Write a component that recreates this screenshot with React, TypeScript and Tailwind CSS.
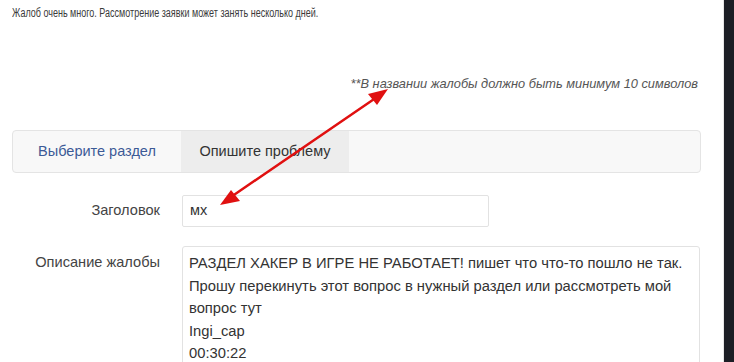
import React from "react";

export default function App() {
  const font = { fontFamily: '"Liberation Sans", Arial, sans-serif' };
  return (
    <div className="relative w-[734px] h-[362px] overflow-hidden bg-white flex" style={font}>
      <div className="w-[724px] h-full bg-white border-r border-[#e6e6e6] pl-3">
        <div className="w-[689px] flex flex-col">
          <div className="pt-[6px] text-[12.5px] leading-[14px] text-[#3a3a3a] whitespace-nowrap origin-left scale-x-[0.72]">
            Жалоб очень много. Рассмотрение заявки может занять несколько дней.
          </div>
          <div className="mt-[56px] text-right pr-[3px] text-[12.8px] leading-[15px] italic text-[#555] whitespace-nowrap">
            **В названии жалобы должно быть минимум 10 символов
          </div>
          <div className="mt-[39px] h-[43px] flex rounded-[4px] border border-[#e4e4e4] bg-[#f8f8f8] overflow-hidden">
            <div className="w-[168px] flex items-center justify-center text-[14.5px] text-[#3c5a96]">
              Выберите раздел
            </div>
            <div className="w-[168px] flex items-center justify-center bg-[#ededed] text-[14.5px] text-[#333]">
              Опишите проблему
            </div>
          </div>
          <div className="mt-[22px] flex items-center">
            <div className="w-[170px] pr-[22px] text-right text-[14.6px] text-[#444]">Заголовок</div>
            <div className="w-[307px] h-[32px] border border-[#e2e2e2] rounded-[2px] px-[7px] flex items-center text-[14.5px] text-[#333]">
              мх
            </div>
          </div>
          <div className="mt-[19px] flex items-start">
            <div className="w-[170px] pr-[22px] pt-[6px] text-right text-[14.6px] leading-[20px] text-[#444]">
              Описание жалобы
            </div>
            <div className="w-[518px] h-[140px] border border-[#e2e2e2] rounded-[3px] px-[6px] pt-[5px] text-[14.75px] leading-[22.5px] text-[#333] whitespace-nowrap">
              <div>РАЗДЕЛ ХАКЕР В ИГРЕ НЕ РАБОТАЕТ! пишет что что-то пошло не так.</div>
              <div>Прошу перекинуть этот вопрос в нужный раздел или рассмотреть мой</div>
              <div>вопрос тут</div>
              <div>Ingi_cap</div>
              <div>00:30:22</div>
            </div>
          </div>
        </div>
      </div>
      <div className="w-[10px] h-full bg-[#1c1e25]" />
      <svg className="absolute inset-0 pointer-events-none" width="734" height="362" viewBox="0 0 734 362">
        <line x1="228" y1="199" x2="380" y2="95" stroke="#e01010" strokeWidth="2.5" strokeLinecap="round" />
        <polygon points="388,89 368,94 377,105" fill="#e01010" />
        <polygon points="220,205 231,190 240,201" fill="#e01010" />
      </svg>
    </div>
  );
}
